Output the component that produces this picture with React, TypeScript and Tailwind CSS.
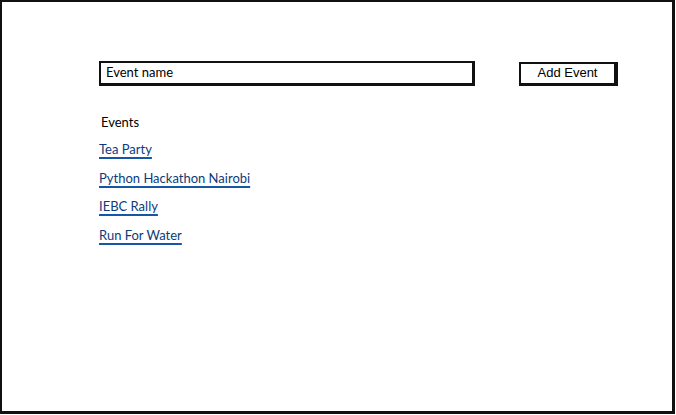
const EVENTS = ["Tea Party", "Python Hackathon Nairobi", "IEBC Rally", "Run For Water"];

export default function App() {
  return (
    <div className="h-[415px] w-[676px] bg-white font-['Lato',sans-serif] text-[13px] text-black">
      <div className="h-[414px] w-[675px] border-2 border-r-[3px] border-b-[3px] border-[#111] pl-[97px] pt-[59px]">
        <div className="flex items-center">
          <div className="flex h-[25px] w-[376px] items-center border-2 border-r-[3px] border-b-[3px] border-[#111] pl-[5px] pb-px">
            Event name
          </div>
          <button className="ml-[44px] h-[24px] w-[99px] border-2 border-r-[4px] border-b-[3px] border-[#111] bg-white pb-[2px] font-['Liberation_Sans',sans-serif] text-[13px] leading-none">
            Add Event
          </button>
        </div>

        <div className="mt-[28px] pl-[2px] leading-[16px]">Events</div>

        <ul className="mt-[11px] flex flex-col gap-[12px]">
          {EVENTS.map((name) => (
            <li key={name} className="leading-[16.5px]">
              <a
                href="#"
                className="text-[#0d3b7a] underline decoration-[#1557a6] decoration-[1.5px] underline-offset-[3px]"
              >
                {name}
              </a>
            </li>
          ))}
        </ul>
      </div>
    </div>
  );
}
